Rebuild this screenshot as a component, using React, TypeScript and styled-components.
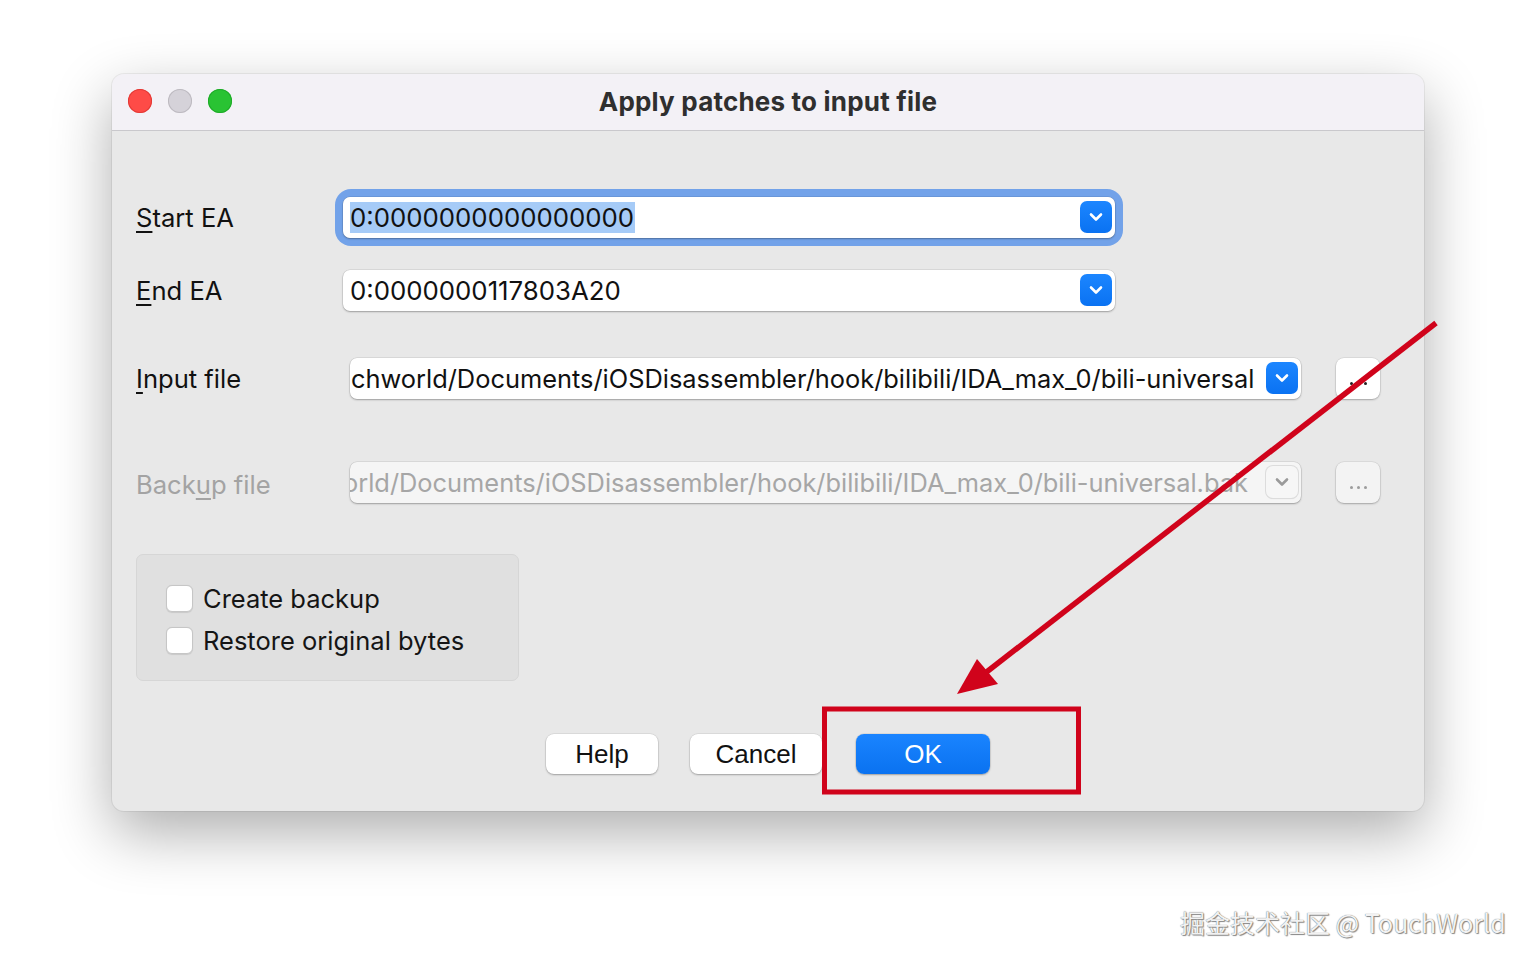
import React from 'react';
import styled, { createGlobalStyle } from 'styled-components';

const GlobalStyle = createGlobalStyle`
  html, body {
    margin: 0;
    padding: 0;
    background: #ffffff;
  }
  body {
    font-family: Inter, "Noto Sans", sans-serif;
    color: #111;
  }
`;

const Page = styled.div`
  position: relative;
  width: 1536px;
  height: 962px;
  padding: 74px 112px 0;
  box-sizing: border-box;
  overflow: hidden;
`;

const Window = styled.div`
  width: 1312px;
  height: 737px;
  border-radius: 12px;
  background: #e8e8e8;
  box-shadow: 0 22px 60px rgba(0, 0, 0, 0.32), 0 0 0 1px rgba(0, 0, 0, 0.06);
  display: flex;
  flex-direction: column;
  overflow: hidden;
`;

const TitleBar = styled.div`
  position: relative;
  height: 56px;
  flex: none;
  background: #f3f1f6;
  border-bottom: 1px solid #c9c8cc;
  display: flex;
  align-items: center;
  justify-content: center;
`;

const Lights = styled.div`
  position: absolute;
  left: 16px;
  top: 15px;
  display: flex;
  gap: 16px;
`;

const Light = styled.span<{ $color: string; $edge: string }>`
  width: 24px;
  height: 24px;
  border-radius: 50%;
  background: ${p => p.$color};
  box-shadow: inset 0 0 0 1px ${p => p.$edge};
`;

const Title = styled.div`
  font-size: 26px;
  font-weight: 700;
  color: #2f2f2f;
  letter-spacing: 0.2px;
  margin-top: -2px;
`;

const Body = styled.div`
  flex: 1;
  display: flex;
  flex-direction: column;
  padding: 0 44px 0 24px;
`;

const Row = styled.div<{ $top: number }>`
  margin-top: ${p => p.$top}px;
  height: 42px;
  display: flex;
  align-items: center;
`;

const Label = styled.div<{ $width: number; $disabled?: boolean }>`
  width: ${p => p.$width}px;
  flex: none;
  font-size: 25.6px;
  color: ${p => (p.$disabled ? '#a3a3a3' : '#111')};
  padding-top: ${p => (p.$disabled ? 4 : 0)}px;
  u {
    text-decoration-thickness: 1.5px;
    text-underline-offset: 4px;
  }
`;

const FocusRing = styled.div`
  border-radius: 8px;
  box-shadow: 0 0 0 8px #72a2e9;
  display: flex;
`;

const Field = styled.div<{ $width: number; $disabled?: boolean }>`
  width: ${p => p.$width}px;
  height: 41px;
  box-sizing: border-box;
  border-radius: 7px;
  background: ${p => (p.$disabled ? '#f5f5f5' : '#ffffff')};
  box-shadow: 0 1px 2px rgba(0, 0, 0, 0.28), 0 0 0 0.5px rgba(0, 0, 0, 0.12);
  display: flex;
  align-items: center;
  padding: 0 3px 0 7px;
  overflow: hidden;
`;

const FieldText = styled.div<{ $disabled?: boolean; $shift?: number; $size: number }>`
  flex: 1;
  min-width: 0;
  overflow: hidden;
  white-space: nowrap;
  font-size: ${p => p.$size}px;
  color: ${p => (p.$disabled ? '#a6a6a6' : '#111')};
  margin-left: ${p => p.$shift ?? 0}px;
`;

const Selected = styled.span`
  background: #a6cbf7;
  padding: 3px 1px 3px 0;
`;

const DropButton = styled.div<{ $disabled?: boolean }>`
  width: 32px;
  height: 32px;
  flex: none;
  border-radius: 7px;
  display: flex;
  align-items: center;
  justify-content: center;
  background: ${p => (p.$disabled ? '#f6f6f6' : 'linear-gradient(#1c86ff, #0a72f2)')};
  box-shadow: ${p => (p.$disabled ? '0 0 0 1px #dcdcdc, 0 1px 1px rgba(0,0,0,0.12)' : 'none')};
`;

const Dots = styled.div<{ $disabled?: boolean }>`
  width: 44px;
  height: 41px;
  flex: none;
  margin-left: 35px;
  border-radius: 8px;
  background: ${p => (p.$disabled ? '#f3f3f3' : '#ffffff')};
  box-shadow: 0 1px 2px rgba(0, 0, 0, 0.25), 0 0 0 0.5px rgba(0, 0, 0, 0.1);
  display: flex;
  align-items: center;
  justify-content: center;
  gap: 4px;
  padding-top: 10px;
  box-sizing: border-box;
  span {
    width: 3px;
    height: 3px;
    border-radius: 50%;
    background: ${p => (p.$disabled ? '#9c9c9c' : '#222')};
  }
`;

const Group = styled.div`
  margin-top: 51px;
  width: 383px;
  height: 127px;
  box-sizing: border-box;
  border-radius: 7px;
  background: #e0e0e0;
  border: 1px solid #d6d6d6;
  display: flex;
  flex-direction: column;
  justify-content: center;
  gap: 15px;
  padding: 4px 0 0 29px;
`;

const Check = styled.label`
  display: flex;
  align-items: center;
  gap: 10px;
  font-size: 25.5px;
  color: #151515;
  height: 27px;
`;

const Box = styled.span`
  width: 27px;
  height: 27px;
  box-sizing: border-box;
  border-radius: 6px;
  background: #ffffff;
  border: 1px solid #c6c6c6;
  box-shadow: 0 0.5px 1px rgba(0, 0, 0, 0.1);
`;

const Buttons = styled.div`
  margin-top: 53px;
  display: flex;
  padding-left: 410px;
  gap: 32px;
`;

const Button = styled.div<{ $width: number; $primary?: boolean }>`
  width: ${p => p.$width}px;
  height: 40px;
  margin-left: ${p => (p.$primary ? 2 : 0)}px;
  border-radius: 8px;
  display: flex;
  align-items: center;
  justify-content: center;
  font-family: "Liberation Sans", Arial, sans-serif;
  font-size: 26px;
  color: ${p => (p.$primary ? '#ffffff' : '#111')};
  background: ${p => (p.$primary ? 'linear-gradient(#1a84ff, #0a72f0)' : '#ffffff')};
  box-shadow: 0 1px 2px rgba(0, 0, 0, 0.28), 0 0 0 0.5px rgba(0, 0, 0, 0.1);
`;

const Overlay = styled.svg`
  position: absolute;
  left: 0;
  top: 0;
  pointer-events: none;
`;

const Watermark = styled.div`
  position: absolute;
  left: 1180px;
  top: 904px;
  font-family: "Noto Sans CJK SC", "Noto Sans", sans-serif;
  font-size: 25px;
  color: #f2f2f2;
  text-shadow: 0 0 1px #5a5a5a, 1px 1px 1px #8a8a8a;
  white-space: nowrap;
`;

const Chevron = ({ color }: { color: string }) => (
  <svg width="14" height="10" viewBox="0 0 14 10">
    <path d="M2 2.5 L7 7.5 L12 2.5" fill="none" stroke={color} strokeWidth="2.6" strokeLinecap="round" strokeLinejoin="round" />
  </svg>
);

export default function App() {
  return (
    <>
      <GlobalStyle />
      <Page>
        <Window>
          <TitleBar>
            <Lights>
              <Light $color="#fe4b47" $edge="#e23a36" />
              <Light $color="#d5d2d9" $edge="#bdbac0" />
              <Light $color="#29c333" $edge="#1eaa28" />
            </Lights>
            <Title>Apply patches to input file</Title>
          </TitleBar>
          <Body>
            <Row $top={65}>
              <Label $width={207}>
                <u>S</u>tart EA
              </Label>
              <FocusRing>
                <Field $width={772}>
                  <FieldText $size={25.8}>
                    <Selected>0:0000000000000000</Selected>
                  </FieldText>
                  <DropButton>
                    <Chevron color="#ffffff" />
                  </DropButton>
                </Field>
              </FocusRing>
            </Row>
            <Row $top={31}>
              <Label $width={207}>
                <u>E</u>nd EA
              </Label>
              <Field $width={772}>
                <FieldText $size={25.8}>0:0000000117803A20</FieldText>
                <DropButton>
                  <Chevron color="#ffffff" />
                </DropButton>
              </Field>
            </Row>
            <Row $top={46}>
              <Label $width={214}>
                <u>I</u>nput file
              </Label>
              <Field $width={951}>
                <FieldText $size={25.4} $shift={-6}>
                  chworld/Documents/iOSDisassembler/hook/bilibili/IDA_max_0/bili-universal
                </FieldText>
                <DropButton>
                  <Chevron color="#ffffff" />
                </DropButton>
              </Field>
              <Dots>
                <span />
                <span />
                <span />
              </Dots>
            </Row>
            <Row $top={62}>
              <Label $width={214} $disabled>
                Back<u>u</u>p file
              </Label>
              <Field $width={951} $disabled>
                <FieldText $size={25.4} $disabled $shift={-14}>
                  orld/Documents/iOSDisassembler/hook/bilibili/IDA_max_0/bili-universal.bak
                </FieldText>
                <DropButton $disabled>
                  <Chevron color="#9a9a9a" />
                </DropButton>
              </Field>
              <Dots $disabled>
                <span />
                <span />
                <span />
              </Dots>
            </Row>
            <Group>
              <Check>
                <Box />
                Create backup
              </Check>
              <Check>
                <Box />
                Restore original bytes
              </Check>
            </Group>
            <Buttons>
              <Button $width={112}>Help</Button>
              <Button $width={132}>Cancel</Button>
              <Button $width={134} $primary>
                OK
              </Button>
            </Buttons>
          </Body>
        </Window>
        <Overlay width="1536" height="962" viewBox="0 0 1536 962">
          <rect x="824.5" y="709" width="254" height="83" fill="none" stroke="#d0031b" strokeWidth="5" />
          <line x1="1436" y1="323" x2="984" y2="674" stroke="#d0031b" strokeWidth="5.5" />
          <polygon points="957,694 977,659 998,684" fill="#d0031b" />
        </Overlay>
        <Watermark>掘金技术社区 @ TouchWorld</Watermark>
      </Page>
    </>
  );
}
